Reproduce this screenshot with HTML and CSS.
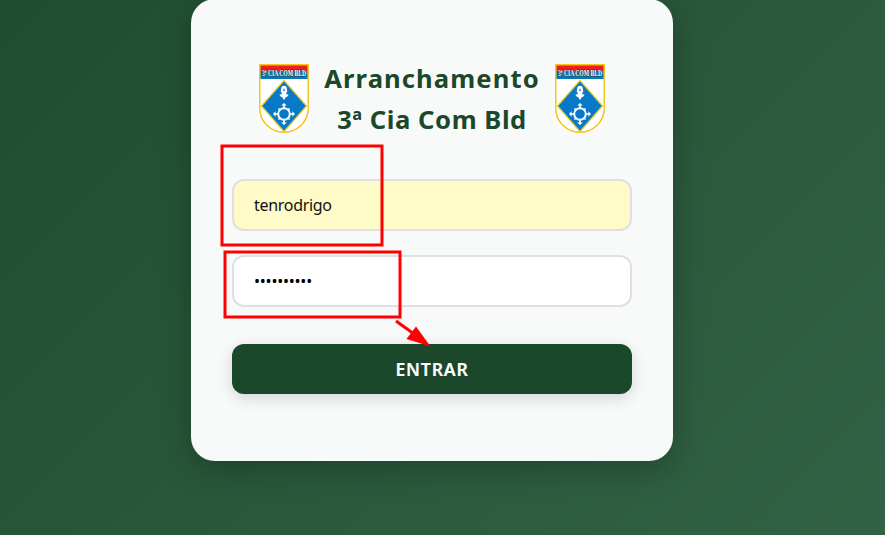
FILE: index.html
```html
<!DOCTYPE html>
<html lang="pt-BR">
<head>
<meta charset="utf-8">
<title>Arranchamento</title>
<link rel="stylesheet" href="styles.css">
</head>
<body>
<svg class="defs" aria-hidden="true">
  <symbol id="crest" viewBox="0 0 50 69">
    <path d="M.8.8h48.4v43.7a24.2 23.7 0 0 1-48.4 0z" fill="#fff"/>
    <path d="M1 1h48v6H1z" fill="#ef1c24"/>
    <path d="M1 7h48v8H1z" fill="#0879b8"/>
    <path d="M25 16.5 47.5 42 25 67.5 2.5 42z" fill="#0879c8" stroke="#e5c832" stroke-width="1.2"/>
    <path d="M.8.8h48.4v43.7a24.2 23.7 0 0 1-48.4 0z" fill="none" stroke="#f5c518" stroke-width="1.5"/>
    <path d="M22.5 23q2.500-2.500 5 0l.8 4-1.500 3.500h-3.600L21.700 27z" fill="#fff"/>
    <path d="M24 30h2l3.500.5-1 2-1.500.5-2 3-2-3-1.500-.5-1-2z" fill="#fff"/>
    <circle cx="25" cy="26" r="1.200" fill="#5aa5d6"/>
    <circle cx="25" cy="50" r="5.800" fill="#0879c8" stroke="#fff" stroke-width="1.900"/>
    <path d="m25 39-2.800 2.600h2V44h1.600v-2.400h2zM25 61l-2.800-2.600h2V56h1.600v2.400h2zM14 50l2.600-2.800v2H19v1.600h-2.400v2zM36 50l-2.600-2.800v2H31v1.600h2.400v2z" fill="#fff"/>
    <path d="m19.500 44.500 2 2M30.500 44.500l-2 2M19.500 55.500l2-2M30.500 55.500l-2-2" stroke="#fff" stroke-width="1.700"/>
  </symbol>
</svg>
<main class="card">
  <header class="brand">
    <svg class="crest" viewBox="0 0 50 69"><use href="#crest"/><text x="25" y="12" class="crest-text" text-anchor="middle" textLength="44" lengthAdjust="spacingAndGlyphs">3ª CIA COM BLD</text></svg>
    <h1>Arranchamento<br><span class="unit">3ª Cia Com Bld</span></h1>
    <svg class="crest" viewBox="0 0 50 69"><use href="#crest"/><text x="25" y="12" class="crest-text" text-anchor="middle" textLength="44" lengthAdjust="spacingAndGlyphs">3ª CIA COM BLD</text></svg>
  </header>
  <form>
    <input class="field filled" type="text" value="tenrodrigo" aria-label="Usuário">
    <input class="field secret" type="password" value="0123456789" aria-label="Senha">
    <button type="button">ENTRAR</button>
  </form>
</main>
<svg class="marks" width="885" height="535" aria-hidden="true">
  <g fill="none" stroke="#f00" stroke-width="3">
    <rect x="222" y="146" width="160" height="99"/>
    <rect x="225" y="252" width="175" height="65"/>
    <path d="m396 321 18 13"/>
  </g>
  <path d="m416 326.500 14.500 20-24-7.500z" fill="#f00"/>
</svg>
</body>
</html>
```
FILE: styles.css
```css
* { box-sizing: border-box; }
body {
  margin: 0;
  height: 535px;
  overflow: hidden;
  background: linear-gradient(135deg, #204d2f 0%, #326245 100%);
  font-family: "Noto Sans", sans-serif;
}
.defs { position: absolute; width: 0; height: 0; }
.card {
  width: 482px;
  height: 462px;
  margin: -1px 0 0 191px;
  padding: 58px 41px 0;
  border-radius: 24px;
  background: #f8faf9;
  box-shadow: 0 8px 32px rgba(0, 0, 0, .25);
}
.brand {
  display: flex;
  justify-content: space-between;
  align-items: center;
  height: 82px;
  margin: 0 27px 40px;
}
.crest { width: 50px; height: 69px; flex: none; overflow: visible; }
.crest-text {
  font: bold 9px "Liberation Serif", serif;
  fill: #fff;
  stroke: #24343e;
  stroke-width: .9px;
  paint-order: stroke;
}
h1 {
  margin: 2px 0 0;
  color: #1b472b;
  font: 700 25.6px/41px "Noto Sans", sans-serif;
  letter-spacing: 1.1px;
  text-align: center;
  white-space: nowrap;
}
.unit { letter-spacing: .55px; }
form { display: flex; flex-direction: column; }
.field {
  width: 400px;
  height: 52px;
  margin: 0 0 24px;
  padding: 0 20px;
  border: 2px solid #dfe0e1;
  border-radius: 12px;
  background: #fff;
  color: #000;
  font: 16px "Noto Sans", sans-serif;
}
.filled { background: #fffbc8; color: #111; letter-spacing: -.3px; }
.secret { margin-bottom: 37px; letter-spacing: -.22px; }
button {
  height: 50px;
  padding: 0;
  border: 0;
  border-radius: 12px;
  background: #1b472b;
  color: #fff;
  font: 600 17.6px "Noto Sans", sans-serif;
  letter-spacing: .8px;
  -webkit-text-stroke: .2px #fff;
  box-shadow: 0 4px 16px rgba(0, 0, 0, .15);
}
.marks { position: absolute; left: 0; top: 0; pointer-events: none; }
```
